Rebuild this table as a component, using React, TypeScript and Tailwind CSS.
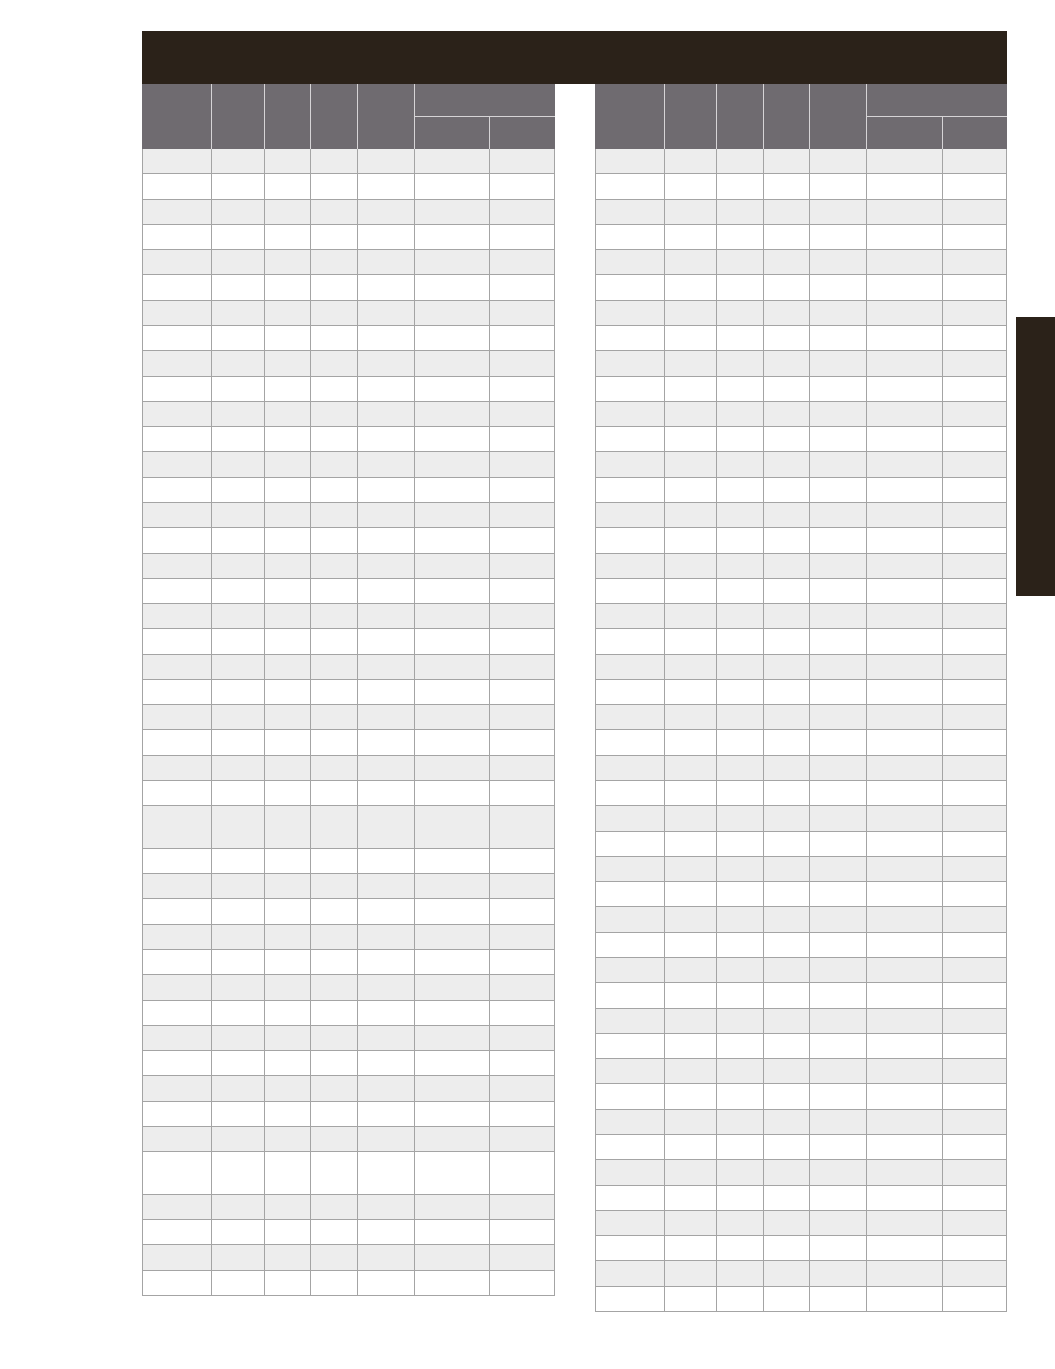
import React from "react";

type RowSpec = { tall?: boolean; gray: boolean };

function makeRows(total: number, tallAt: number[]): RowSpec[] {
  const rows: RowSpec[] = [];
  for (let i = 0; i < total; i++) {
    rows.push({ gray: i % 2 === 0, tall: tallAt.includes(i) });
  }
  return rows;
}

const leftRows = makeRows(44, [26, 39]);
const rightRows = makeRows(46, []);

function Table({ cols, rows }: { cols: number[]; rows: RowSpec[] }) {
  const template = cols.map((c) => `${c}px`).join(" ");
  const groupW = cols[5] + cols[6];
  return (
    <div className="flex flex-col" style={{ width: cols.reduce((a, b) => a + b, 0) }}>
      {/* header */}
      <div className="flex h-[65px] bg-[#6f6b70]">
        {cols.slice(0, 5).map((w, i) => (
          <div key={i} className="h-full border-r border-[#d6d4d6]" style={{ width: w }} />
        ))}
        <div className="flex h-full flex-col" style={{ width: groupW }}>
          <div className="h-[33px] border-b border-[#d6d4d6]" />
          <div className="flex flex-1">
            <div className="h-full border-r border-[#d6d4d6]" style={{ width: cols[5] }} />
            <div className="h-full" style={{ width: cols[6] }} />
          </div>
        </div>
      </div>
      {/* body */}
      {rows.map((r, ri) => (
        <div
          key={ri}
          className={`grid border-b border-[#a4a4a4] ${r.gray ? "bg-[#ededed]" : "bg-white"} ${r.tall ? "h-[42.6px]" : "h-[25.29px]"}`}
          style={{ gridTemplateColumns: template }}
        >
          {cols.map((_, ci) => (
            <div
              key={ci}
              className={`h-full border-r border-[#a4a4a4] ${ci === 0 ? "border-l" : ""}`}
            />
          ))}
        </div>
      ))}
    </div>
  );
}

export default function App() {
  return (
    <div className="relative h-[1369px] w-[1055px] overflow-hidden bg-white font-['Liberation_Sans',sans-serif]">
      <div className="flex flex-col pl-[142px] pt-[31px]">
        <div className="h-[53px] w-[865px] bg-[#2b2219]" />
        <div className="flex items-start gap-[40px]">
          <Table cols={[70, 53, 46, 47, 57, 75, 65]} rows={leftRows} />
          <Table cols={[70, 52, 47, 46, 57, 76, 64]} rows={rightRows} />
        </div>
      </div>
      <div className="absolute left-[1016px] top-[317px] h-[279px] w-[39px] bg-[#2b2219]" />
    </div>
  );
}
